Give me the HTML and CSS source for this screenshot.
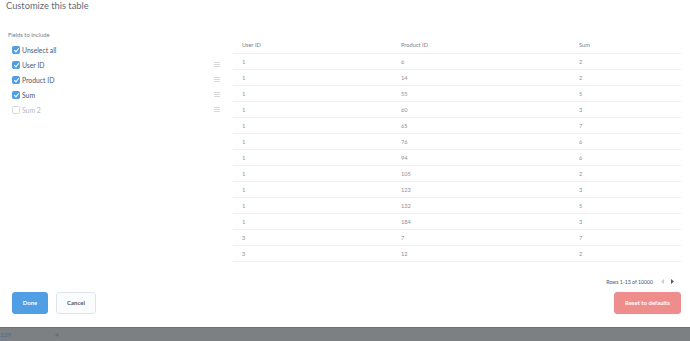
FILE: index.html
```html
<!DOCTYPE html>
<html lang="en">
<head>
    <meta charset="UTF-8">
    <meta name="viewport" content="width=device-width, initial-scale=1.0">
    <title>Customize this table</title>
    <link rel="stylesheet" href="styles.css">
</head>
<body>
    <div class="modal">
        <h2 class="title">Customize this table</h2>

        <div class="content">
            <div class="fields">
                <p class="fieldsLabel">Fields to include</p>
                <div class="field">
                    <span class="check on"></span>
                    <span class="name">Unselect all</span>
                </div>
                <div class="field">
                    <span class="check on"></span>
                    <span class="name">User ID</span>
                    <span class="grip"></span>
                </div>
                <div class="field">
                    <span class="check on"></span>
                    <span class="name">Product ID</span>
                    <span class="grip"></span>
                </div>
                <div class="field">
                    <span class="check on"></span>
                    <span class="name">Sum</span>
                    <span class="grip"></span>
                </div>
                <div class="field off">
                    <span class="check"></span>
                    <span class="name">Sum 2</span>
                    <span class="grip"></span>
                </div>
            </div>

            <div class="preview">
                <table class="grid">
                    <thead>
                        <tr><th class="c1">User ID</th><th class="c2">Product ID</th><th>Sum</th></tr>
                    </thead>
                    <tbody>
                        <tr><td>1</td><td>6</td><td>2</td></tr>
                        <tr><td>1</td><td>14</td><td>2</td></tr>
                        <tr><td>1</td><td>55</td><td>5</td></tr>
                        <tr><td>1</td><td>60</td><td>3</td></tr>
                        <tr><td>1</td><td>65</td><td>7</td></tr>
                        <tr><td>1</td><td>76</td><td>6</td></tr>
                        <tr><td>1</td><td>94</td><td>6</td></tr>
                        <tr><td>1</td><td>105</td><td>2</td></tr>
                        <tr><td>1</td><td>123</td><td>3</td></tr>
                        <tr><td>1</td><td>132</td><td>5</td></tr>
                        <tr><td>1</td><td>184</td><td>3</td></tr>
                        <tr><td>3</td><td>7</td><td>7</td></tr>
                        <tr><td>3</td><td>12</td><td>2</td></tr>
                    </tbody>
                </table>
                <div class="pager">
                    <span>Rows 1-13 of 10000</span>
                    <svg class="arrow" width="4" height="5" viewBox="0 0 4 5"><path d="M3 0 L0 2.5 L3 5 Z" fill="#c9ced3"/></svg>
                    <svg class="arrow" width="4" height="5" viewBox="0 0 4 5"><path d="M1 0 L4 2.5 L1 5 Z" fill="#4c5773"/></svg>
                </div>
            </div>
        </div>

        <div class="actions">
            <button class="btn primary">Done</button>
            <button class="btn">Cancel</button>
            <button class="btn danger">Reset to defaults</button>
        </div>
    </div>

    <div class="behind">
        <span class="link">139</span>
        <span>4</span>
    </div>
</body>
</html>
```

FILE: styles.css
```css
*{
    padding: 0px;
    margin: 0px;
    box-sizing: border-box;
}
body{
    background-color: white;
    font-family: Lato, 'Open Sans', sans-serif;
    color: #4c5773;
    width: 690px;
    height: 341px;
    overflow: hidden;
}
.modal{
    height: 327px;
    display: flex;
    flex-direction: column;
}
.title{
    font-size: 9.3px;
    font-weight: 400;
    color: #5f6a76;
    padding: 0px 6px;
    height: 37px;
    line-height: 12px;
}
.content{
    display: flex;
}
.fields{
    width: 233px;
    padding-left: 8px;
}
.fieldsLabel{
    font-size: 5.8px;
    color: #74838f;
    line-height: 8px;
    margin-top: -6px;
    margin-bottom: 3px;
}
.field{
    display: flex;
    align-items: center;
    height: 15px;
    padding-left: 4px;
    font-size: 6.8px;
    color: #4c5773;
}
.field.off{
    color: #b8bbc3;
}
.check{
    width: 8px;
    height: 8px;
    border-radius: 1.5px;
    border: 1px solid #d4d9dd;
    margin-right: 2px;
    position: relative;
}
.check.on{
    background-color: #509ee3;
    border-color: #509ee3;
}
.check.on::after{
    content: "";
    position: absolute;
    left: 1.6px;
    top: 0.4px;
    width: 2px;
    height: 4px;
    border-right: 1.3px solid white;
    border-bottom: 1.3px solid white;
    transform: rotate(40deg);
}
.name{
    flex: 1;
}
.grip{
    width: 6px;
    height: 5px;
    margin-right: 13px;
    border-top: 1px solid #d6d8dc;
    border-bottom: 1px solid #d6d8dc;
    position: relative;
}
.grip::after{
    content: "";
    position: absolute;
    left: 0px;
    right: 0px;
    top: 1px;
    border-top: 1px solid #d6d8dc;
}
.preview{
    width: 448px;
}
.grid{
    width: 100%;
    border-collapse: collapse;
    font-size: 5.7px;
    color: #8a9199;
}
.grid th, .grid td{
    text-align: left;
    font-weight: 400;
    height: 16px;
    padding: 0px 0px 0px 9px;
    border-bottom: 1px solid #eef0f2;
}
.grid th{
    color: #7b838c;
}
.grid .c1{
    width: 159px;
}
.grid .c2{
    width: 178px;
}
.pager{
    display: flex;
    align-items: center;
    justify-content: flex-end;
    gap: 5px;
    font-size: 5.2px;
    color: #4c5773;
    height: 8px;
    margin-top: 16px;
    padding-right: 7px;
}
.pager span{
    margin-right: 3px;
}
.actions{
    display: flex;
    gap: 8px;
    padding: 0px 9px 0px 12px;
    margin-top: 6px;
}
.btn{
    font-family: Lato, 'Open Sans', sans-serif;
    font-size: 6px;
    font-weight: 700;
    height: 22px;
    border-radius: 3px;
    border: 1px solid #e0e4e9;
    background-color: #fbfcfd;
    color: #4c5773;
    width: 40px;
}
.btn.primary{
    width: 36px;
    background-color: #509ee3;
    border-color: #509ee3;
    color: white;
}
.btn.danger{
    margin-left: auto;
    width: 67px;
    background-color: #ef8c8c;
    border-color: #ef8c8c;
    color: white;
}
.behind{
    height: 14px;
    background-color: #7c8083;
    border-top: 1px solid #6d7174;
    display: flex;
    align-items: center;
    gap: 44px;
    font-size: 6.5px;
    color: #5e6266;
}
.behind .link{
    color: #4a6f95;
}
```
